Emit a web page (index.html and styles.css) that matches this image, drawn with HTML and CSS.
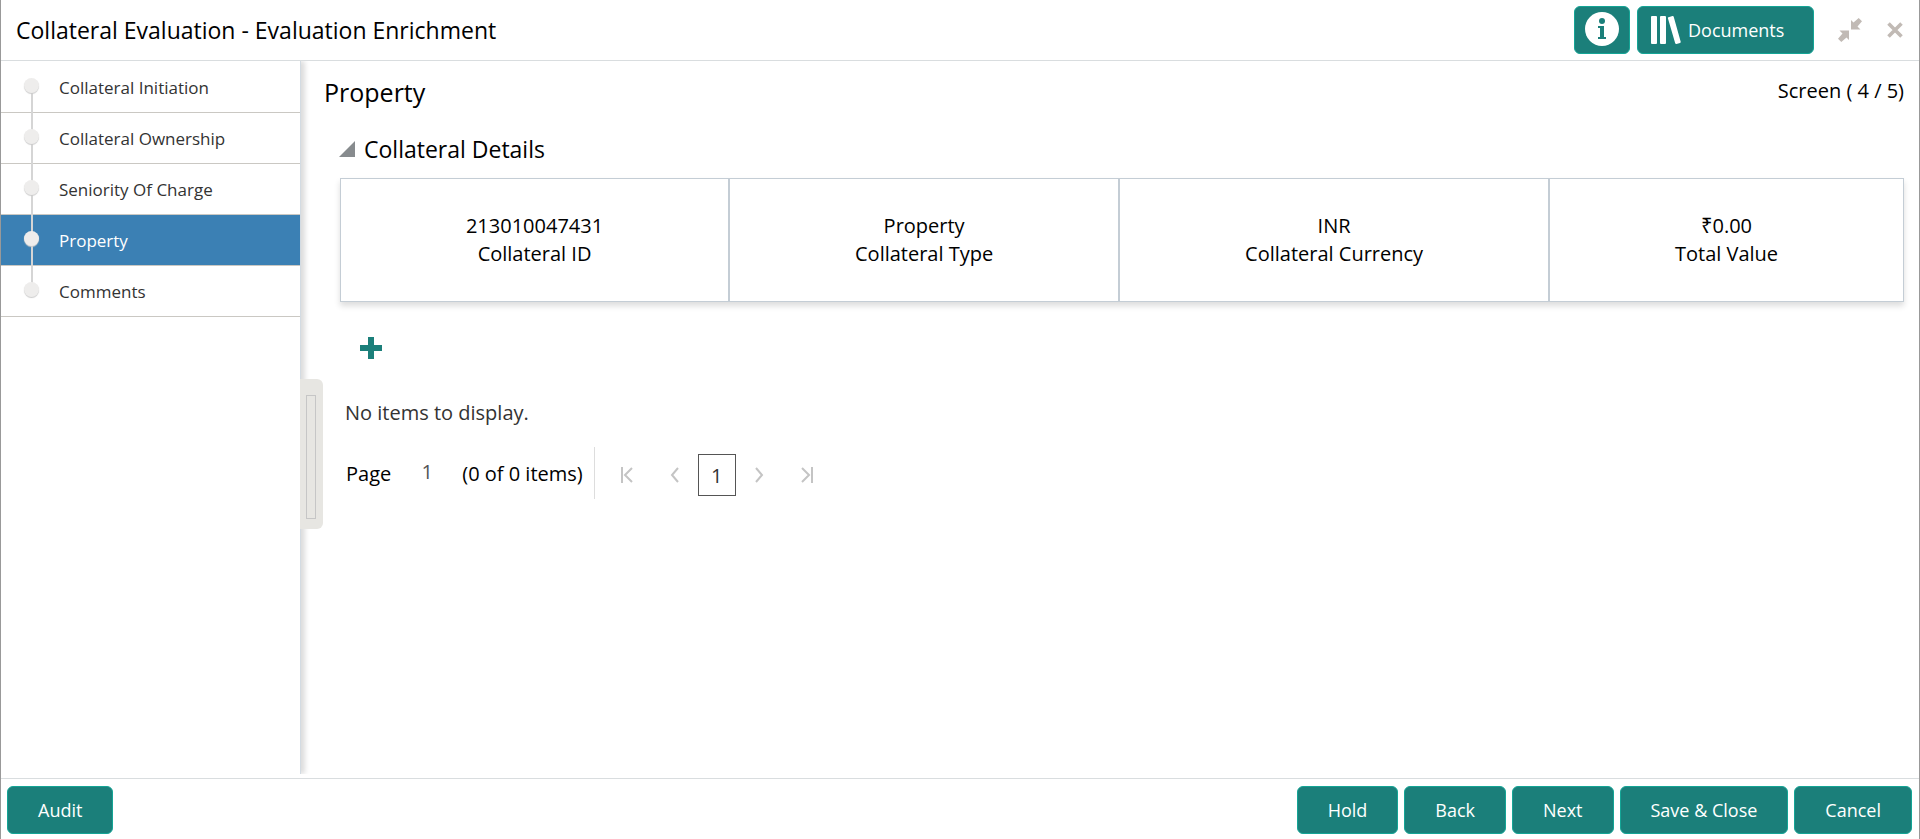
FILE: index.html
```html
<!DOCTYPE html>
<html lang="en">
<head>
	<meta charset="UTF-8">
	<title>Collateral Evaluation - Evaluation Enrichment</title>
	<link rel="stylesheet" href="styles.css">
</head>
<body>
	<header class="header">
		<h1 class="title">Collateral Evaluation - Evaluation Enrichment</h1>
		<button type="button" class="btn btn-info" aria-label="Information">
			<svg width="36" height="36" viewBox="0 0 36 36">
				<circle cx="18" cy="17" r="17" fill="#fff"/>
				<circle cx="18" cy="9" r="3" fill="#1b7f7a"/>
				<path d="M14 14h6v11h2v2h-8v-2h2v-9h-2z" fill="#1b7f7a"/>
			</svg>
		</button>
		<button type="button" class="btn btn-docs">
			<svg width="32" height="30" viewBox="0 0 32 30" fill="#fff">
				<rect x="1" y="1" width="6" height="28" rx="1"/>
				<rect x="10" y="1" width="6" height="28" rx="1"/>
				<path d="M18.500 2.300l4-1.200q1-.2 1.200.7l7 25q.2 1-.7 1.200l-3.500 1q-1 .2-1.300-.7l-7.300-25q-.2-.8.6-1z"/>
			</svg>
			<span>Documents</span>
		</button>
		<button type="button" class="icon-btn shrink" aria-label="Collapse">
			<svg width="24" height="24" viewBox="0 0 24 24" fill="#c1bab5">
				<path d="M13 2v9.500h9.500l-3-3 4.500-5.200-3.300-3.300-5.200 4.500z"/>
				<path d="M11 22v-9.500h-9.500l3 3-4.500 5.200 3.300 3.300 5.200-4.500z"/>
			</svg>
		</button>
		<button type="button" class="icon-btn close" aria-label="Close">
			<svg width="16" height="16" viewBox="0 0 16 16" stroke="#c1bab5" stroke-width="3.600">
				<path d="M1.500 1.500l13 13M14.500 1.500l-13 13"/>
			</svg>
		</button>
	</header>

	<div class="body">
		<nav class="sidebar">
			<ul class="steps">
				<li><a href="#">Collateral Initiation</a></li>
				<li><a href="#">Collateral Ownership</a></li>
				<li><a href="#">Seniority Of Charge</a></li>
				<li class="active"><a href="#">Property</a></li>
				<li><a href="#">Comments</a></li>
			</ul>
			<button type="button" class="handle" aria-label="Toggle menu"></button>
		</nav>

		<main class="content">
			<div class="content-head">
				<h2>Property</h2>
				<span class="screen">Screen ( 4 / 5)</span>
			</div>

			<section class="details">
				<h3><span class="arrow"></span>Collateral Details</h3>
				<div class="cards">
					<div class="card"><span>213010047431</span><span>Collateral ID</span></div>
					<div class="card"><span>Property</span><span>Collateral Type</span></div>
					<div class="card"><span>INR</span><span>Collateral Currency</span></div>
					<div class="card"><span>₹0.00</span><span>Total Value</span></div>
				</div>

				<button type="button" class="icon-btn add" aria-label="Add">
					<svg width="22" height="22" viewBox="0 0 22 22" fill="#1b7f7a">
						<path d="M8 0h6v8h8v6h-8v8h-6v-8h-8v-6h8z"/>
					</svg>
				</button>

				<p class="empty">No items to display.</p>

				<div class="paging">
					<label for="page">Page</label>
					<input type="text" id="page" value="1">
					<span class="range">(0 of 0 items)</span>
					<div class="pager">
						<button type="button" class="icon-btn" aria-label="First page">
							<svg width="14" height="16" viewBox="0 0 14 16"><path d="M2 0v16M12 1l-7 7 7 7"/></svg>
						</button>
						<button type="button" class="icon-btn" aria-label="Previous page">
							<svg width="10" height="16" viewBox="0 0 10 16"><path d="M8 1l-6 7 6 7"/></svg>
						</button>
						<button type="button" class="current">1</button>
						<button type="button" class="icon-btn" aria-label="Next page">
							<svg width="10" height="16" viewBox="0 0 10 16"><path d="M2 1l6 7-6 7"/></svg>
						</button>
						<button type="button" class="icon-btn" aria-label="Last page">
							<svg width="14" height="16" viewBox="0 0 14 16"><path d="M12 0v16M2 1l7 7-7 7"/></svg>
						</button>
					</div>
				</div>
			</section>
		</main>
	</div>

	<footer class="footer">
		<button type="button" class="btn audit">Audit</button>
		<button type="button" class="btn">Hold</button>
		<button type="button" class="btn">Back</button>
		<button type="button" class="btn">Next</button>
		<button type="button" class="btn">Save &amp; Close</button>
		<button type="button" class="btn">Cancel</button>
	</footer>
</body>
</html>
```

FILE: styles.css
```css
*{margin:0; padding:0; box-sizing:border-box;}
li{list-style:none;}
a{text-decoration:none; color:inherit;}
svg{display:block;}
h1,h2,h3{font-weight:400;}

body{display:flex; flex-direction:column; min-height:100vh; border-left:1px solid #999; border-right:1px solid #999; background:#fff; color:#000; font-family:"Open Sans","Noto Sans",sans-serif; font-size:20px;}
button,input{font-family:inherit; font-size:inherit;}

/* buttons */
.btn{display:flex; align-items:center; justify-content:center; height:48px; padding:0 30px; border:1px solid #14a596; border-radius:6px; background:#1b7f7a; color:#fff; font-size:18px; cursor:pointer;}
.icon-btn{display:flex; align-items:center; justify-content:center; border:0; background:none; cursor:pointer;}

/* header */
.header{display:flex; align-items:center; height:61px; padding:0 16px 0 15px; border-bottom:1px solid #d9dddf;}
.title{flex:1; font-size:23px; line-height:32px;}
.btn-info{width:56px; padding:0;}
.btn-docs{width:177px; margin-left:7px; padding:0 12px; justify-content:flex-start; gap:6px;}
.shrink{margin-left:24px;}
.close{margin-left:25px;}

/* left side steps */
.body{display:flex; flex:1; padding-bottom:4px;}
.sidebar{position:relative; flex:none; width:300px; padding-top:1px; border-right:1px solid #d3dbe2; box-shadow:4px 0 5px #ddd; clip-path:inset(0 -24px 0 0);}
.steps li{position:relative; height:51px; border-bottom:1px solid #cac8c3; color:#333; font-size:17px;}
.steps a{display:block; padding-left:58px; line-height:52px;}
.steps li:before{content:""; position:absolute; left:30px; top:0; width:2px; height:51px; background:#d5d5d5;}
.steps li:first-child:before{top:24px; height:27px;}
.steps li:last-child:before{height:24px;}
.steps li:after{content:""; position:absolute; left:23px; top:16px; width:15px; height:15px; border-radius:50%; background:#eeedec; box-shadow:0 1px 1px #ccc;}
.steps .active{background:#3b80b4; color:#fff;}
.handle{position:absolute; left:299px; top:318px; width:23px; height:150px; padding:16px 0 12px; border:0; border-radius:0 6px 6px 0; background:#e7e6e2; cursor:pointer;}
.handle:before{content:""; display:block; width:8px; height:122px; margin-left:6px; border:1px solid #c6c6c6;}

/* content */
.content{flex:1; padding:14px 15px 0 23px;}
.content-head{display:flex; justify-content:space-between; align-items:flex-start;}
.content-head h2{font-size:25px; line-height:34px;}
.screen{font-size:20px; line-height:32px;}
.details{padding:22px 0 0 15px;}
.details h3{display:flex; align-items:center; gap:9px; font-size:23px; line-height:36px;}
.arrow{width:16px; height:16px; background:#878b8e; clip-path:polygon(100% 0,100% 100%,0 100%);}
.cards{display:flex; margin:11px 0 0 1px; border:1px solid #c4cdd5; box-shadow:0 4px 6px #ddd;}
.card{display:flex; flex:1 1 auto; flex-direction:column; align-items:center; padding:33px 0; line-height:28px;}
.card + .card{border-left:2px solid #c4cdd5;}
.add{margin:35px 0 0 21px;}
.empty{margin-top:38px; padding-left:6px; color:#333; line-height:32px;}

/* paging */
.paging{display:flex; align-items:center; margin-top:18px; padding-left:7px;}
.paging input{width:40px; height:44px; margin:0 15px 0 16px; padding-bottom:4px; border:0; outline:0; background:none; color:#555; text-align:center;}
.range{padding-right:11px;}
.pager{display:flex; align-items:center; height:52px; padding:4px 0 0 25px; border-left:1px solid #ddd;}
.pager svg{fill:none; stroke:#c4c4c4; stroke-width:2;}
.pager .icon-btn + .icon-btn{margin-left:36px;}
.current{width:38px; height:42px; margin:0 18px; border:1px solid #555; background:#fff; color:#333; cursor:pointer;}

/* footer */
.footer{display:flex; gap:6px; padding:7px 7px 5px 6px; border-top:1px solid #d9dddf;}
.audit{margin-right:auto;}
```
